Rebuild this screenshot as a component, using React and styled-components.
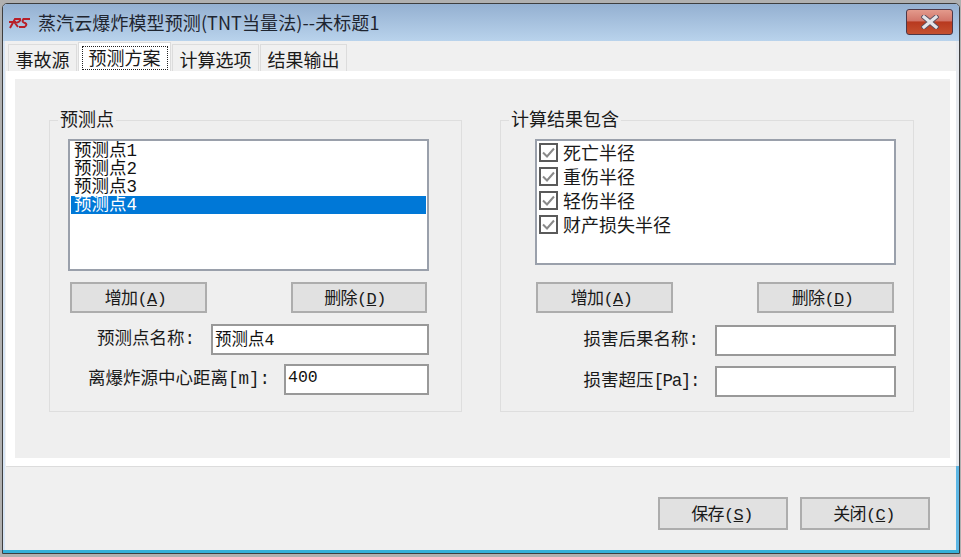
import React from 'react';
import styled, { createGlobalStyle } from 'styled-components';

const Global = createGlobalStyle`
  html, body { margin: 0; padding: 0; background: #b0b0b0; }
  * { box-sizing: border-box; }
`;
const FONT = `"Liberation Mono", "Noto Sans CJK SC", monospace`;

const Screen = styled.div`
  width: 961px; height: 557px; padding: 3px 1px 3px 2px; overflow: hidden;
  font-family: "Noto Sans CJK SC", sans-serif; color: #1a1a1a;
`;
const Win = styled.div`
  width: 958px; height: 551px; border: 1px solid #3e3e3e; border-radius: 5px 5px 0 0;
  background: #f0f0f0; display: flex; flex-direction: column; overflow: hidden;
  box-shadow: inset 0 -3px 0 #35b0d8;
`;
const TitleBar = styled.div`
  height: 37px; flex: none; display: flex; align-items: center; padding: 1px 5px 0 5px;
  background: linear-gradient(#94b0d1, #b9d3ec);
`;
const Logo = styled.svg`width: 23px; height: 14px; margin-right: 7px; flex: none;`;
const Title = styled.div`
  flex: 1; font-size: 18px; line-height: 24px; color: #1f2530; white-space: nowrap; margin-top: -2px;
  letter-spacing: 0.1px;
`;
const CloseBtn = styled.div`
  width: 47px; height: 26px; border: 1px solid #4d3747; border-radius: 3px; flex: none; margin-right: 1px; margin-top: -2px;
  display: flex; align-items: center; justify-content: center;
  background: linear-gradient(#e39a8c 0%, #d2766a 45%, #b8391f 50%, #c5502f 100%);
`;
const Body = styled.div`
  flex: 1; display: flex; flex-direction: column; padding: 0 3px 0 3px; margin-bottom: 3px;
  background:
    linear-gradient(#d6e4f4, #d6e4f4) left top / 2px 100% no-repeat,
    linear-gradient(#e6e9ee 425px, #5cb6e4 425px) right top / 3px 100% no-repeat;
`;
const Tabs = styled.div`height: 30px; display: flex; align-items: flex-end; flex: none; padding-left: 2px;`;
const Tab = styled.div`
  height: ${p => p.$active ? 29 : 27}px;
  padding: ${p => p.$active ? '0 9.5px' : '2px 6.5px 0'};
  margin-right: 1px;
  background: ${p => p.$active ? '#fff' : '#f0f0f0'};
  border: 1px solid #dcdcdc; border-bottom: none;
  font-size: 18px; line-height: 24px; color: #1a1a1a; display: flex; align-items: center;
`;
const TabFocus = styled.span`
  border: 1px dotted #222; line-height: 21px; height: 24px; padding: 0 6px; display: block; margin: 2px -7px 0;
`;
const Panel = styled.div`
  height: 395px; flex: none; background: #fff; padding: 8px 6px 8px 9px;
`;
const Inner = styled.div`
  height: 100%; background: #efefef; padding: 41px 36px 0 34px;
  display: grid; grid-template-columns: 413px 414px; column-gap: 38px; align-items: start;
`;
const Group = styled.section`
  position: relative; height: 292px; border: 1px solid #dedede;
  padding: 18px 0 0 ${p => p.$pad}px;
`;
const Legend = styled.h3`
  position: absolute; left: 8px; top: -15px; margin: 0; padding: 0 2px; background: #efefef;
  font-size: 18px; font-weight: 400; line-height: 24px; color: #1a1a1a;
`;
const ListBox = styled.div`
  width: 361px; height: ${p => p.$h}px; background: #fff; border: 2px solid #9aa0ab;
  padding: ${p => p.$pad};
`;
const Item = styled.div`
  height: 18px; line-height: 19px; font-size: 17.5px; font-family: ${FONT}; padding-left: 3px;
  white-space: nowrap; margin-right: 1px;
  background: ${p => p.$sel ? '#0078d7' : 'transparent'};
  color: ${p => p.$sel ? '#fff' : '#111'};
`;
const Check = styled.label`
  display: flex; align-items: center; height: 24px; gap: 5px; font-size: 18px; color: #1a1a1a;
`;
const CheckText = styled.span`margin-top: -3px;`;
const Box = styled.svg`width: 19px; height: 19px; flex: none; margin-top: -1px;`;
const BtnRow = styled.div`
  display: flex; justify-content: space-between; width: ${p => p.$w}px; margin: ${p => p.$mt}px 0 0 ${p => p.$ml}px;
`;
const Btn = styled.button`
  width: ${p => p.$w}px; height: ${p => p.$h}px; padding: 0 ${p => p.$shift}px 3px 0; background: #e1e1e1; border: 2px solid #adadad;
  font-family: ${FONT}; font-size: 17px; color: #1a1a1a; display: block; border-radius: 0;
  letter-spacing: -0.6px;
`;
const Field = styled.div`
  display: flex; justify-content: flex-end; align-items: center; width: 361px; height: 31px; margin-top: ${p => p.$mt}px;
`;
const Label = styled.label`
  font-family: ${FONT}; font-size: 17.5px; line-height: 24px; color: #1a1a1a; margin-right: ${p => p.$mr}px;
  white-space: nowrap; margin-top: -1px;
`;
const Tight = styled.span`letter-spacing: -1.4px;`;
const TextBox = styled.input`
  width: ${p => p.$w}px; height: 31px; border: 2px solid #999; background: #fff; border-radius: 0; outline: none;
  font-family: ${FONT}; font-size: 16.5px; color: #111; padding: 0 2px 4px 2px; margin: 0;
`;
const Footer = styled.div`
  flex: 1; display: flex; justify-content: flex-end; gap: 12px; align-items: flex-start;
  padding: 30px 26px 0 0; border-top: 1px solid #dcdcdc;
`;

const CheckIcon = () => (
  <Box viewBox="0 0 19 19">
    <rect x="1" y="1" width="17" height="17" fill="#fff" stroke="#5a5a5a" strokeWidth="2" />
    <path d="M4 9.5 L8 13.5 L15 5.5" fill="none" stroke="#8a8a8a" strokeWidth="2" />
  </Box>
);
const Mnemonic = ({ t, k }) => <>{t}(<u>{k}</u>)</>;

const checks = ['死亡半径', '重伤半径', '轻伤半径', '财产损失半径'];

export default function App() {
  return (
    <Screen>
      <Global />
      <Win>
        <TitleBar>
          <Logo viewBox="0 0 23 14">
            <path d="M2 12 L7 3 H12 Q13 6 7 7 L10 11 M1 6 H8" fill="none" stroke="#b81f28" strokeWidth="2" />
            <path d="M22 3 H15.5 Q13 6 17 7 Q20 8.5 16.5 11 H11" fill="none" stroke="#b81f28" strokeWidth="2" />
          </Logo>
          <Title>蒸汽云爆炸模型预测(TNT当量法)--未标题1</Title>
          <CloseBtn>
            <svg width="18" height="14" viewBox="0 0 18 14">
              <path d="M3 2 L15 12 M15 2 L3 12" stroke="#5a5060" strokeWidth="5" strokeLinecap="square" fill="none" />
              <path d="M3 2 L15 12 M15 2 L3 12" stroke="#e4e4e8" strokeWidth="3.2" strokeLinecap="square" fill="none" />
            </svg>
          </CloseBtn>
        </TitleBar>
        <Body>
          <Tabs>
            <Tab>事故源</Tab>
            <Tab $active><TabFocus>预测方案</TabFocus></Tab>
            <Tab>计算选项</Tab>
            <Tab>结果输出</Tab>
          </Tabs>
          <Panel>
            <Inner>
              <Group $pad={18}>
                <Legend>预测点</Legend>
                <ListBox $h={132} $pad="1px 0 0 1px">
                  <Item>预测点1</Item>
                  <Item>预测点2</Item>
                  <Item>预测点3</Item>
                  <Item $sel>预测点4</Item>
                </ListBox>
                <BtnRow $w={357} $mt={11} $ml={2}>
                  <Btn $w={137} $h={31} $shift={6}><Mnemonic t="增加" k="A" /></Btn>
                  <Btn $w={136} $h={31} $shift={8}><Mnemonic t="删除" k="D" /></Btn>
                </BtnRow>
                <Field $mt={11}>
                  <Label $mr={16}>预测点名称:</Label>
                  <TextBox $w={218} readOnly value="预测点4" />
                </Field>
                <Field $mt={9}>
                  <Label $mr={14}>离爆炸源中心距离[m]:</Label>
                  <TextBox $w={145} readOnly value="400" />
                </Field>
              </Group>
              <Group $pad={34}>
                <Legend>计算结果包含</Legend>
                <ListBox $h={126} $pad="0 0 0 2px">
                  {checks.map(c => <Check key={c}><CheckIcon /><CheckText>{c}</CheckText></Check>)}
                </ListBox>
                <BtnRow $w={358} $mt={17} $ml={1}>
                  <Btn $w={137} $h={31} $shift={6}><Mnemonic t="增加" k="A" /></Btn>
                  <Btn $w={137} $h={31} $shift={6}><Mnemonic t="删除" k="D" /></Btn>
                </BtnRow>
                <Field $mt={12}>
                  <Label $mr={16}>损害后果名称:</Label>
                  <TextBox $w={181} readOnly value="" />
                </Field>
                <Field $mt={10}>
                  <Label $mr={16}>损害超压<Tight>[Pa]:</Tight></Label>
                  <TextBox $w={181} readOnly value="" />
                </Field>
              </Group>
            </Inner>
          </Panel>
          <Footer>
            <Btn $w={130} $h={33} $shift={2}><Mnemonic t="保存" k="S" /></Btn>
            <Btn $w={130} $h={33} $shift={2}><Mnemonic t="关闭" k="C" /></Btn>
          </Footer>
        </Body>
      </Win>
    </Screen>
  );
}
